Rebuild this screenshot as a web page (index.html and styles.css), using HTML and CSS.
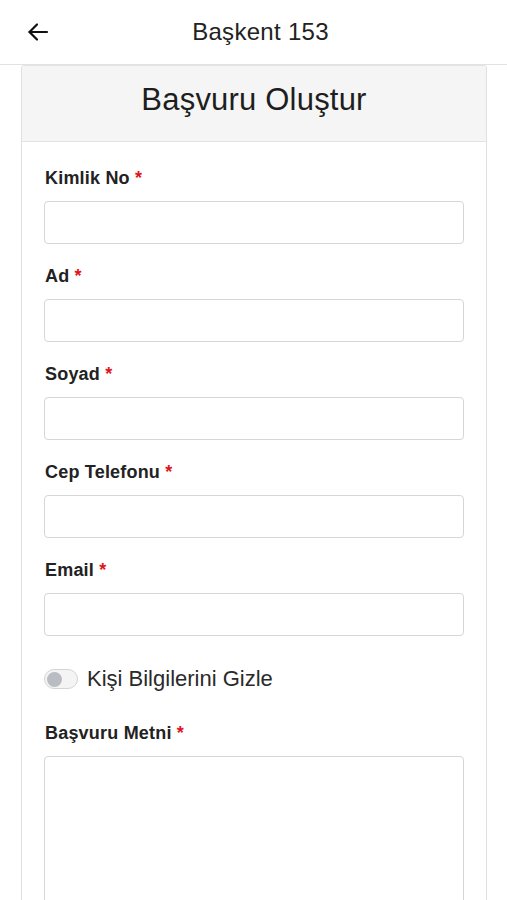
FILE: index.html
```html
<!DOCTYPE html>
<html lang="tr">
<head>
  <meta charset="UTF-8">
  <title>Başkent 153</title>
  <link rel="stylesheet" href="styles.css">
</head>
<body>

<!-- üst bar -->
<div class="topbar">
  <button class="back" aria-label="Geri">
    <svg width="24" height="24" viewBox="0 0 24 24" fill="none" stroke="#111" stroke-width="2.2" stroke-linecap="round" stroke-linejoin="round">
      <path d="M21 12H3.5"/>
      <path d="M11 4.5L3.5 12L11 19.5"/>
    </svg>
  </button>
  <div class="topbar-title">Başkent 153</div>
</div>

<!-- başvuru formu -->
<div class="card">
  <div class="card-header">Başvuru Oluştur</div>
  <div class="card-body">
    <div class="field">
      <label>Kimlik No <span class="req">*</span></label>
      <input type="text">
    </div>
    <div class="field">
      <label>Ad <span class="req">*</span></label>
      <input type="text">
    </div>
    <div class="field">
      <label>Soyad <span class="req">*</span></label>
      <input type="text">
    </div>
    <div class="field">
      <label>Cep Telefonu <span class="req">*</span></label>
      <input type="text">
    </div>
    <div class="field">
      <label>Email <span class="req">*</span></label>
      <input type="text">
    </div>

    <div class="switch-row">
      <span class="switch"><span class="knob"></span></span>
      <span class="switch-text">Kişi Bilgilerini Gizle</span>
    </div>

    <div class="field">
      <label>Başvuru Metni <span class="req">*</span></label>
      <textarea></textarea>
    </div>
  </div>
</div>

</body>
</html>
```

FILE: styles.css
```css
body { margin: 0; font-family: "Liberation Sans", Arial, sans-serif; color: #222; background: #fff; overflow: hidden; }
.topbar { height: 64px; border-bottom: 1px solid #e2e2e2; display: flex; align-items: center; }
.back { border: 0; background: none; padding: 0; margin-left: 25px; width: 26px; height: 26px; display: flex; align-items: center; justify-content: center; }
.topbar-title { flex: 1; text-align: center; font-size: 24px; color: #222; margin-right: 37px; letter-spacing: 0.3px; }
.card { margin: 0 20px 0 21px; border: 1px solid #e0e0e0; border-top-color: #e4e4e4; border-radius: 3px 3px 0 0; }
.card-header { height: 76px; padding-bottom: 7px; box-sizing: border-box; background: #f5f5f5; border-bottom: 1px solid #e3e3e3; display: flex; align-items: center; justify-content: center; font-size: 31px; color: #1e1e1e; letter-spacing: 0.2px; }
.card-body { padding: 26px 22px 0 22px; }
.field { margin-bottom: 22px; }
.field label { display: block; font-weight: bold; font-size: 18px; line-height: 20px; color: #222; margin: 0 0 13px 1px; letter-spacing: 0.2px; }
.req { color: #e0141e; }
.field input { display: block; box-sizing: border-box; width: 100%; height: 43px; border: 1px solid #d6d6d6; border-radius: 4px; background: #fff; }
.field textarea { display: block; box-sizing: border-box; width: 100%; height: 200px; border: 1px solid #d6d6d6; border-radius: 4px; resize: none; }
.switch-row { display: flex; align-items: center; gap: 9px; margin: 30px 0 31px 0; }
.switch { width: 30px; height: 18px; border: 1px solid #d4d4d4; border-radius: 10px; background: #f4f4f4; display: flex; align-items: center; padding-left: 2px; }
.knob { width: 15px; height: 15px; border-radius: 50%; background: #b9bcc2; }
.switch-text { font-size: 22px; color: #2a2a2a; }
```
